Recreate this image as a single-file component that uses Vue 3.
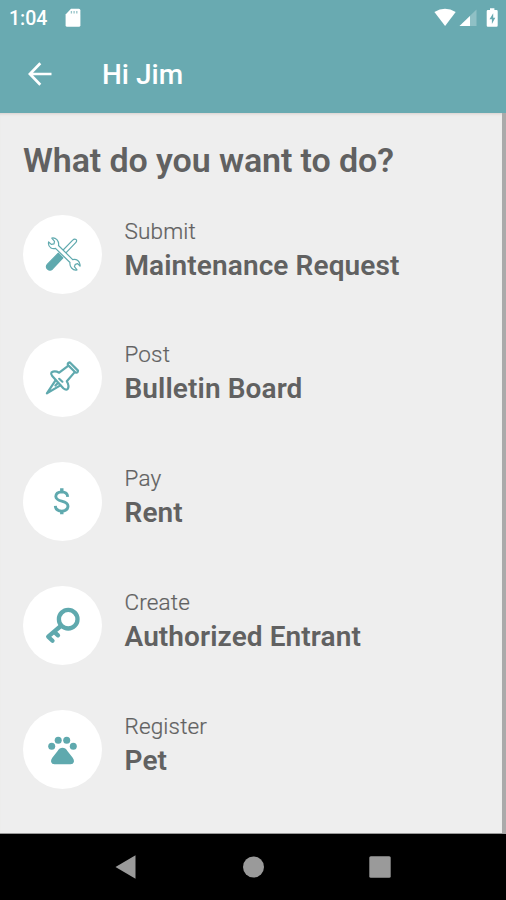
<script setup>
const items = [
  { icon: 'tools', action: 'Submit', label: 'Maintenance Request' },
  { icon: 'pin', action: 'Post', label: 'Bulletin Board' },
  { icon: 'dollar', action: 'Pay', label: 'Rent' },
  { icon: 'key', action: 'Create', label: 'Authorized Entrant' },
  { icon: 'paw', action: 'Register', label: 'Pet' },
]
</script>

<template>
  <div class="screen">
    <header class="top">
      <div class="status">
        <span class="clock">1:04</span>
        <svg class="sd" width="16" height="20" viewBox="0 0 16 20">
          <path fill="#fff" d="M6 .8h7.800a1.600 1.600 0 0 1 1.600 1.600v14.800a1.600 1.600 0 0 1-1.600 1.600H2.200a1.600 1.600 0 0 1-1.600-1.600V6.400z" />
          <path stroke="#69aab1" stroke-opacity=".7" stroke-width="1.300" d="M6.400 3v2.500M9.100 3v2.500M11.800 3v2.500" />
        </svg>
        <svg class="signals" width="66" height="22" viewBox="0 0 66 22">
          <path fill="#fff" d="M.4 4.100Q11 -2.600 21.700 4.100L11.100 18z" />
          <path fill="#8fc0c5" d="M42.500 1.500V18H25.500z" />
          <path fill="#fff" d="M36 8V18H25.500z" />
          <path fill="#fff" d="M56 .2h4.400v1.900h2.100q1.200 0 1.200 1.200v14.300q0 1.200-1.200 1.200h-8.600q-1.200 0-1.200-1.200V3.300q0-1.200 1.200-1.200H56z" />
          <path fill="#69aab1" d="M59.200 5.200L55.500 11.300h2.400v4.600l3.400-6.200h-2.100z" />
        </svg>
      </div>
      <div class="bar">
        <svg class="back" width="24" height="24" viewBox="0 0 24 24" fill="none" stroke="#fff" stroke-width="2.700">
          <path d="M12.300 1.300L1.900 12l10.400 10.700M2 12h21.500" />
        </svg>
        <h1>Hi Jim</h1>
      </div>
    </header>

    <main class="content">
      <h2>What do you want to do?</h2>
      <ul class="list">
        <li v-for="item in items" :key="item.icon" class="item">
          <span class="disc">
            <svg v-if="item.icon === 'tools'" width="79" height="79" viewBox="0 0 79 79" fill="none" stroke="#5fa9ae" stroke-width="1.200" stroke-linejoin="round">
              <path d="M37.700 37.500L49.700 25.200Q51.400 23.300 53.100 24.500Q54.300 26 52.700 27.700L40.800 40.200z" />
              <path fill="#fff" d="M28.800 23.100L31.500 26.300L31 28.900L28.300 29.400L25.600 27Q24.800 31 28 33Q30 34.200 32.500 33.400L47 47.500Q46.500 50.500 48.600 53Q51 55.700 54 54.900L51.400 51.700L52.300 49.300L54.700 48.700L57 51.200Q57.600 47.800 54.800 45.500Q52.500 43.900 49.700 44.600L35.500 30.500Q36.200 27.400 33.900 24.700Q31.700 22.500 28.800 23.100z" />
              <path fill="#5fa9ae" d="M35.300 38.200L39.900 42.800L29.300 54.200Q26.900 56.200 24.500 54Q22.300 51.700 24.500 49.200z" />
            </svg>
            <svg v-else-if="item.icon === 'pin'" width="79" height="79" viewBox="0 0 79 79" fill="none" stroke="#5fa9ae" stroke-width="2.200" stroke-linecap="round" stroke-linejoin="round">
              <path d="M46.700 24.300Q44.500 24.600 44.800 26.900L52.500 34.500Q55 35.200 55 32.600z" />
              <path d="M44.800 28.100L36.200 34.700Q31.700 32.200 28.500 34.400Q27.500 36.100 29.200 38L40.300 50.200Q43 52.700 44.700 51Q46.600 48 43.800 43.200L51.300 34.600" />
              <path d="M32.500 42.300L23.900 55.300L37.400 47.400M32.400 47.500L34.700 45.200M36.200 40.800L39.400 43.700" />
            </svg>
            <svg v-else-if="item.icon === 'dollar'" width="79" height="79" viewBox="0 0 79 79" fill="none" stroke="#5fa9ae" stroke-width="2.900">
              <path d="M44.700 34.800Q44.300 29.900 38.700 29.900Q33 30.100 32.800 34.500Q33 37.700 38.700 39.100Q44.900 40.600 45 44.200Q44.700 49 38.800 49.100Q32.600 49 32.300 43.900" />
              <path stroke-width="3.400" d="M38.800 26.200V30M38.800 49V52.300" />
            </svg>
            <svg v-else-if="item.icon === 'key'" width="79" height="79" viewBox="0 0 79 79" fill="none" stroke="#5fa9ae" stroke-width="4.300" stroke-linecap="round" stroke-linejoin="round">
              <circle cx="45.200" cy="33.200" r="9.300" />
              <path d="M37.800 40L25.200 50.700L29.500 54.700M31.200 45.900L35 49.300" />
            </svg>
            <svg v-else width="79" height="79" viewBox="0 0 79 79" fill="#5fa9ae">
              <circle cx="28.700" cy="36.200" r="3.500" />
              <circle cx="35.200" cy="30.200" r="3.500" />
              <circle cx="43.700" cy="30.200" r="3.500" />
              <circle cx="50.300" cy="36.200" r="3.500" />
              <path d="M39.500 37.800Q42.500 37.800 44.400 41L49.700 47.700Q51.400 50 50.800 52Q50.300 54.200 47.500 54.200H31.500Q28.700 54.200 28.200 52Q27.600 50 29.300 47.700L34.600 41Q36.500 37.800 39.500 37.800z" />
            </svg>
          </span>
          <span class="words">
            <span class="action">{{ item.action }}</span>
            <span class="label">{{ item.label }}</span>
          </span>
        </li>
      </ul>
    </main>

    <nav class="nav">
      <svg width="22" height="24" viewBox="0 0 22 24"><path fill="#9a9a9a" d="M.5 12L20.500.200V23.800z" /></svg>
      <svg width="22" height="24" viewBox="0 0 22 24"><circle cx="11.500" cy="12" r="10.500" fill="#9a9a9a" /></svg>
      <svg width="22" height="24" viewBox="0 0 22 24"><rect x=".300" y="1.200" width="21.400" height="21.600" rx="1.500" fill="#9a9a9a" /></svg>
    </nav>
  </div>
</template>

<style>
body { margin: 0; }
</style>

<style scoped>
.screen {
  display: flex;
  flex-direction: column;
  width: 506px;
  height: 900px;
  background: #eee;
  font-family: Roboto, "Liberation Sans", sans-serif;
  overflow: hidden;
}
.top { height: 113px; background: #69aab1; color: #fff; }
.status { display: flex; align-items: center; height: 36px; padding: 0 6px 0 9px; }
.clock { font-size: 19.500px; font-weight: 500; line-height: 38px; padding-top: 1px; }
.sd { margin-left: 18px; }
.signals { margin-left: auto; margin-top: 2px; }
.bar { display: flex; align-items: center; height: 77px; padding-left: 28px; box-sizing: border-box; }
.back { margin-bottom: 2px; }
h1 { margin: 0 0 0 50px; font-size: 28px; font-weight: 500; line-height: 36px; }
.content {
  height: 721px;
  box-sizing: border-box;
  padding: 26px 0 0 23px;
  border-right: 4px solid #aaa;
  border-bottom: 1px solid #999;
  box-shadow: inset 0 3px 3px -2px #d8d0cc;
  color: #616161;
}
h2 { margin: 0; font-size: 34px; font-weight: 600; line-height: 42px; letter-spacing: -0.100px; }
.list { list-style: none; margin: 33.500px 0 0; padding: 0; display: grid; gap: 44.750px; }
.item { display: flex; height: 79px; gap: 22.500px; }
.disc { display: flex; width: 79px; height: 79px; border-radius: 50%; background: #fff; }
.words { display: flex; flex-direction: column; }
.action { font-size: 22.500px; font-weight: 300; line-height: 32px; letter-spacing: 0.150px; -webkit-text-stroke: 0.200px #616161; }
.label { font-size: 28px; font-weight: 600; line-height: 38px; letter-spacing: 0.100px; }
.nav { flex: 1; display: flex; align-items: center; justify-content: space-between; padding: 0 115px; background: #000; }
</style>
